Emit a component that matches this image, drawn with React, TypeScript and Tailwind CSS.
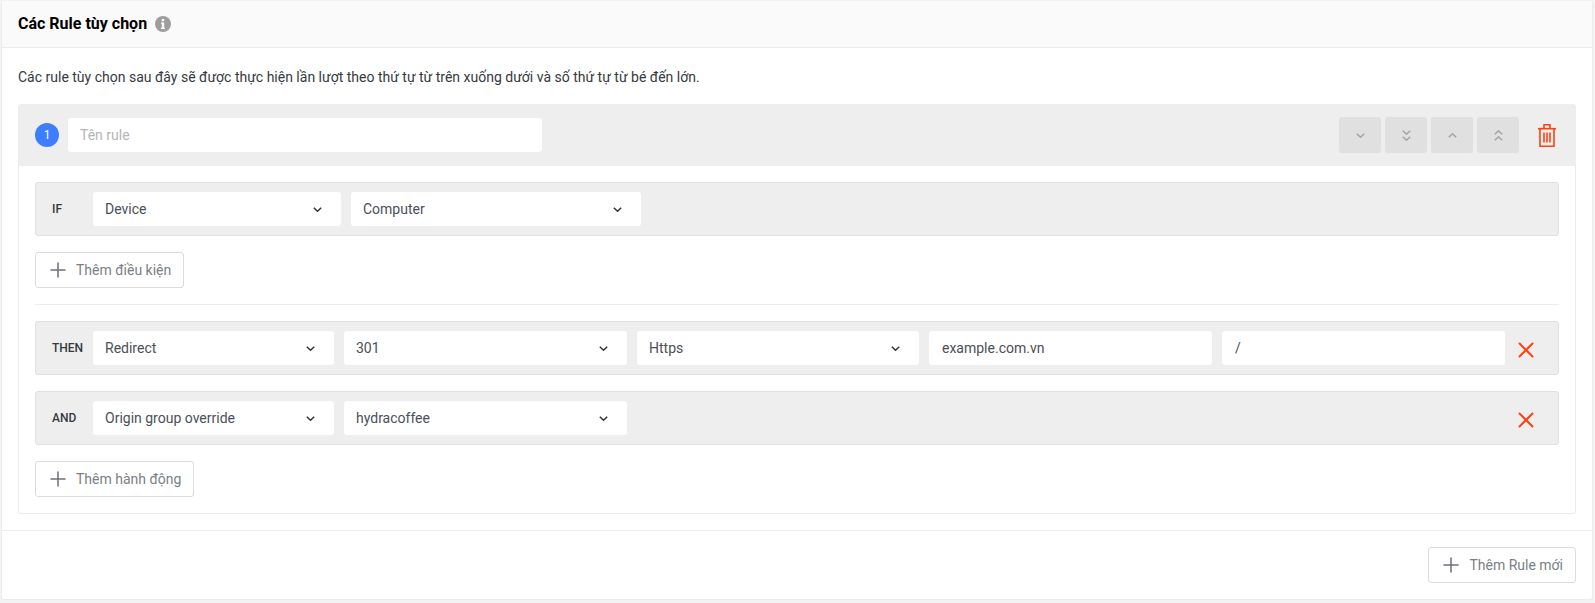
import { Plus, X } from 'lucide-react';

function Chevron({ className = '' }: { className?: string }) {
  return (
    <svg width="9" height="5" viewBox="0 0 9 5" fill="none" stroke="currentColor" strokeWidth="1.5" className={className}>
      <path d="M.8.7l3.700 3.500L8.200.7" />
    </svg>
  );
}

function Select({ label, width }: { label: string; width: string }) {
  return (
    <div className={`${width} h-[34px] bg-white rounded-[3px] flex items-center justify-between pl-[12px] pr-[19px] text-[14px] text-[#495057] shrink-0`}>
      <span>{label}</span>
      <Chevron className="text-[#333]" />
    </div>
  );
}

function TextBox({ value, width }: { value: string; width: string }) {
  return (
    <div className={`${width} h-[34px] bg-white rounded-[3px] flex items-center pl-[13px] text-[14px] text-[#495057] shrink-0`}>
      {value}
    </div>
  );
}

function Row({ label, children, onRemove }: { label: string; children: React.ReactNode; onRemove?: boolean }) {
  return (
    <div className="h-[54px] bg-[#eeeeee] border border-[#e0e0e0] rounded-[3px] flex items-center">
      <div className="w-[57px] pl-[16px] text-[12px] font-medium text-[#343a40] shrink-0">{label}</div>
      <div className="flex-1 flex items-center gap-[10px]">{children}</div>
      {onRemove && (
        <div className="w-[52px] flex justify-start pl-[7px] shrink-0 pt-[4px]">
          <X size={26} strokeWidth={1.8} className="text-[#ff4112]" />
        </div>
      )}
    </div>
  );
}

function AddButton({ label, className = '' }: { label: string; className?: string }) {
  return (
    <button className={`h-[36px] bg-white border border-[#dcdcdc] rounded-[3px] flex items-center pl-[10px] pr-[12px] text-[14px] text-[#7a7f85] ${className}`}>
      <Plus size={24} strokeWidth={1.5} className="text-[#6c7075] mr-[6px]" />
      {label}
    </button>
  );
}

function MoveButton({ double, up }: { double?: boolean; up?: boolean }) {
  return (
    <div className="w-[42px] h-[36px] bg-[#e0e0e0] rounded-[3px] flex flex-col items-center justify-center gap-[1px] text-[#a3a3a3]">
      <Chevron className={up ? 'rotate-180' : ''} />
      {double && <Chevron className={up ? 'rotate-180' : ''} />}
    </div>
  );
}

function TrashIcon() {
  return (
    <svg width="18" height="23" viewBox="0 0 18 23" fill="none" stroke="#ff4112" strokeWidth="1.6">
      <path d="M0 4.700h18" />
      <path d="M6 4.500V.8h6v3.700" />
      <path d="M2 5v17.200h14V5" />
      <path d="M6 8.500v10M9 8.500v10M12 8.500v10" />
    </svg>
  );
}

function InfoIcon() {
  return (
    <svg width="16" height="16" viewBox="0 0 16 16">
      <circle cx="8" cy="8" r="8" fill="#9e9e9e" />
      <rect x="6.800" y="3" width="2.400" height="2.300" fill="#fff" />
      <path d="M6 6.500h3.200v5.300H10v1.200H6v-1.200h.8V7.700H6z" fill="#fff" />
    </svg>
  );
}

export default function App() {
  return (
    <div className="min-h-[603px] bg-[#f3f3f3] pl-[1px] pr-[2px] pt-[1px] pb-[4px] font-['Roboto',sans-serif]">
      <div className="bg-white border border-[#ececec] border-t-0 rounded-[3px]">
        <div className="h-[47px] bg-[#fafafa] border-b border-[#ececec] flex items-center pl-[16px]">
          <h2 className="text-[16px] font-bold text-black">Các Rule tùy chọn</h2>
          <span className="ml-[8px]">
            <InfoIcon />
          </span>
        </div>

        <div className="px-[16px] pt-[19px] pb-[16px]">
          <p className="text-[14px] leading-[20px] text-[#343a40] mb-[17px]">
            Các rule tùy chọn sau đây sẽ được thực hiện lần lượt theo thứ tự từ trên xuống dưới và số thứ tự từ bé đến lớn.
          </p>

          <div className="rounded-[3px]">
            <div className="h-[62px] bg-[#eeeeee] rounded-t-[3px] flex items-center pl-[17px] pr-[20px]">
              <div className="w-[24px] h-[24px] rounded-full bg-[#3d7eff] text-white text-[12px] flex items-center justify-center shrink-0">1</div>
              <div className="ml-[9px] w-[474px] h-[34px] bg-white rounded-[3px] flex items-center pl-[12px] text-[14px] text-[#b5b5b5]">Tên rule</div>
              <div className="ml-auto flex items-center gap-[4px]">
                <MoveButton />
                <MoveButton double />
                <MoveButton up />
                <MoveButton double up />
              </div>
              <div className="ml-[19px]">
                <TrashIcon />
              </div>
            </div>

            <div className="p-[16px] border border-t-0 border-[#ececec] rounded-b-[3px]">
              <Row label="IF">
                <Select label="Device" width="w-[248px]" />
                <Select label="Computer" width="w-[290px]" />
              </Row>
              <AddButton label="Thêm điều kiện" className="mt-[16px]" />
              <div className="h-px bg-[#ececec] mt-[16px] mb-[16px]" />
              <Row label="THEN" onRemove>
                <Select label="Redirect" width="w-[241px]" />
                <Select label="301" width="w-[283px]" />
                <Select label="Https" width="w-[282px]" />
                <TextBox value="example.com.vn" width="w-[283px]" />
                <TextBox value="/" width="w-[283px]" />
              </Row>
              <div className="h-[16px]" />
              <Row label="AND" onRemove>
                <Select label="Origin group override" width="w-[241px]" />
                <Select label="hydracoffee" width="w-[283px]" />
              </Row>
              <AddButton label="Thêm hành động" className="mt-[16px]" />
            </div>
          </div>
        </div>

        <div className="h-[69px] border-t border-[#ececec] flex items-center justify-end pr-[16px]">
          <AddButton label="Thêm Rule mới" />
        </div>
      </div>
    </div>
  );
}
